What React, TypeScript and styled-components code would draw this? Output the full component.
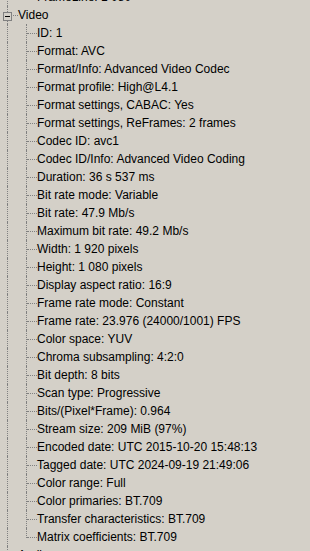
import styled, { createGlobalStyle } from "styled-components";

const GlobalStyle = createGlobalStyle`
    html, body {
        margin: 0;
        padding: 0;
        background: #d4d0c8;
    }
`;

const Viewport = styled.div`
    width: 310px;
    height: 551px;
    overflow: hidden;
    background: #d4d0c8;
    font-family: "Liberation Sans", Arial, sans-serif;
    font-size: 12px;
    color: #000;
`;

const TreeList = styled.ul`
    list-style: none;
    margin: -12px 0 0 0;
    padding: 0;
`;

const Row = styled.li`
    display: flex;
    align-items: center;
    height: 18px;
    white-space: nowrap;
`;

const Guide = styled.span<{ $line: "full" | "half" | "none"; $branch?: boolean }>`
    position: relative;
    flex: 0 0 19px;
    height: 18px;

    &::before {
        content: "";
        display: ${(p) => (p.$line === "none" ? "none" : "block")};
        position: absolute;
        left: 7px;
        top: 0;
        height: ${(p) => (p.$line === "half" ? "10px" : "18px")};
        border-left: 1px dotted #808080;
    }

    &::after {
        content: "";
        display: ${(p) => (p.$branch ? "block" : "none")};
        position: absolute;
        left: 8px;
        top: 9px;
        width: 10px;
        border-top: 1px dotted #808080;
    }
`;

const Toggle = styled.span`
    position: absolute;
    left: 3px;
    top: 6px;
    width: 7px;
    height: 7px;
    border: 1px solid #808080;
    background: #d4d0c8;
    z-index: 1;

    &::after {
        content: "";
        position: absolute;
        left: 1px;
        top: 3px;
        width: 5px;
        height: 1px;
        background: #000;
    }
`;

const Label = styled.span`
    margin-left: -1px;
    line-height: 18px;
`;

const videoFields = [
    "ID: 1",
    "Format: AVC",
    "Format/Info: Advanced Video Codec",
    "Format profile: High@L4.1",
    "Format settings, CABAC: Yes",
    "Format settings, ReFrames: 2 frames",
    "Codec ID: avc1",
    "Codec ID/Info: Advanced Video Coding",
    "Duration: 36 s 537 ms",
    "Bit rate mode: Variable",
    "Bit rate: 47.9 Mb/s",
    "Maximum bit rate: 49.2 Mb/s",
    "Width: 1 920 pixels",
    "Height: 1 080 pixels",
    "Display aspect ratio: 16:9",
    "Frame rate mode: Constant",
    "Frame rate: 23.976 (24000/1001) FPS",
    "Color space: YUV",
    "Chroma subsampling: 4:2:0",
    "Bit depth: 8 bits",
    "Scan type: Progressive",
    "Bits/(Pixel*Frame): 0.964",
    "Stream size: 209 MiB (97%)",
    "Encoded date: UTC 2015-10-20 15:48:13",
    "Tagged date: UTC 2024-09-19 21:49:06",
    "Color range: Full",
    "Color primaries: BT.709",
    "Transfer characteristics: BT.709",
    "Matrix coefficients: BT.709",
];

export default function App() {
    return (
        <Viewport>
            <GlobalStyle />
            <TreeList>
                <Row>
                    <Guide $line="full" />
                    <Guide $line="half" $branch />
                    <Label>FrameLine: 1 080</Label>
                </Row>
                <Row>
                    <Guide $line="full" $branch>
                        <Toggle />
                    </Guide>
                    <Label>Video</Label>
                </Row>
                {videoFields.map((field, i) => (
                    <Row key={field}>
                        <Guide $line="full" />
                        <Guide $line={i === videoFields.length - 1 ? "half" : "full"} $branch />
                        <Label>{field}</Label>
                    </Row>
                ))}
                <Row>
                    <Guide $line="full" $branch>
                        <Toggle />
                    </Guide>
                    <Label>Audio</Label>
                </Row>
            </TreeList>
        </Viewport>
    );
}
